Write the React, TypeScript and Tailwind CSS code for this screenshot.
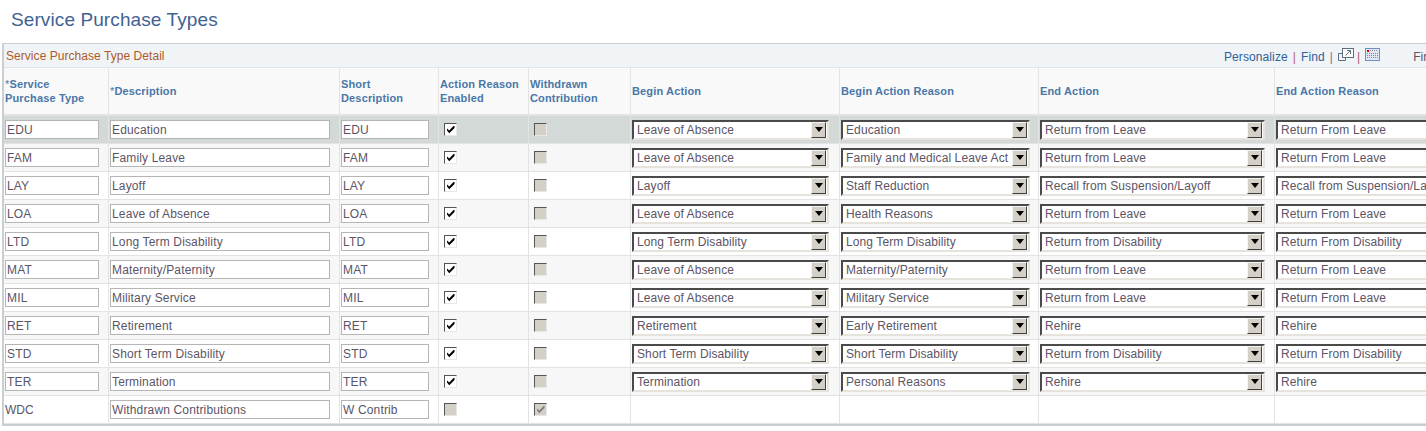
import React from "react"

type Row = {
  code: string
  desc: string
  short: string
  enabled: boolean
  withdrawn: boolean
  selects?: [string, string, string, string]
}

const rows: Row[] = [
  { code: "EDU", desc: "Education", short: "EDU", enabled: true, withdrawn: false, selects: ["Leave of Absence", "Education", "Return from Leave", "Return From Leave"] },
  { code: "FAM", desc: "Family Leave", short: "FAM", enabled: true, withdrawn: false, selects: ["Leave of Absence", "Family and Medical Leave Act", "Return from Leave", "Return From Leave"] },
  { code: "LAY", desc: "Layoff", short: "LAY", enabled: true, withdrawn: false, selects: ["Layoff", "Staff Reduction", "Recall from Suspension/Layoff", "Recall from Suspension/Layoff"] },
  { code: "LOA", desc: "Leave of Absence", short: "LOA", enabled: true, withdrawn: false, selects: ["Leave of Absence", "Health Reasons", "Return from Leave", "Return From Leave"] },
  { code: "LTD", desc: "Long Term Disability", short: "LTD", enabled: true, withdrawn: false, selects: ["Long Term Disability", "Long Term Disability", "Return from Disability", "Return From Disability"] },
  { code: "MAT", desc: "Maternity/Paternity", short: "MAT", enabled: true, withdrawn: false, selects: ["Leave of Absence", "Maternity/Paternity", "Return from Leave", "Return From Leave"] },
  { code: "MIL", desc: "Military Service", short: "MIL", enabled: true, withdrawn: false, selects: ["Leave of Absence", "Military Service", "Return from Leave", "Return From Leave"] },
  { code: "RET", desc: "Retirement", short: "RET", enabled: true, withdrawn: false, selects: ["Retirement", "Early Retirement", "Rehire", "Rehire"] },
  { code: "STD", desc: "Short Term Disability", short: "STD", enabled: true, withdrawn: false, selects: ["Short Term Disability", "Short Term Disability", "Return from Disability", "Return From Disability"] },
  { code: "TER", desc: "Termination", short: "TER", enabled: true, withdrawn: false, selects: ["Termination", "Personal Reasons", "Rehire", "Rehire"] },
  { code: "WDC", desc: "Withdrawn Contributions", short: "W Contrib", enabled: false, withdrawn: true },
]

const gridCols = "grid grid-cols-[105px_231px_99px_90px_102px_209px_199px_236px_220px]"
const cell = "flex items-center border-r border-b border-[#e3e3e3] pl-[1px]"

function Head({ children }: { children: React.ReactNode }) {
  return (
    <div className="flex h-[48px] items-center border-r border-b-2 border-[#e3e3e3] pl-[1px] text-[11px] leading-[14px] font-bold tracking-[0.15px] text-[#4a77a8]">
      <div>{children}</div>
    </div>
  )
}

function TextBox({ value, width }: { value: string; width: string }) {
  return (
    <div className={`${width} h-[19px] overflow-hidden border border-[#b5b5b5] bg-white pl-[1px] text-[12px] leading-[19px] tracking-[0.15px] whitespace-nowrap text-[#5c5566]`}>
      {value}
    </div>
  )
}

function Check({ on, disabled }: { on: boolean; disabled?: boolean }) {
  return (
    <div
      className={`ml-[4px] flex h-[13px] w-[13px] items-center justify-center border border-t-[#555] border-r-[#e8e8e8] border-b-[#e8e8e8] border-l-[#555] ${
        disabled ? "bg-[#d4d0c8]" : "bg-white"
      }`}
    >
      {on && (
        <svg viewBox="0 0 9 9" className="h-[9px] w-[9px]">
          <path d="M1 3.5 L3.2 5.5 L7.5 1 L8.5 1 L8.5 3 L3.5 8 L3 8 L1 5.5 Z" fill={disabled ? "#808080" : "#000"} />
        </svg>
      )}
    </div>
  )
}

function Select({ value, width }: { value: string; width: string }) {
  return (
    <div className={`${width} flex h-[20px] items-center border-2 border-t-[#4a4a4a] border-r-[#e6e3dd] border-b-[#e6e3dd] border-l-[#4a4a4a] bg-white`}>
      <div className="min-w-0 flex-1 overflow-hidden pl-[3px] text-[12px] leading-[16px] tracking-[0.1px] whitespace-nowrap text-[#5c5566]">{value}</div>
      <div className="mr-[1px] flex h-[16px] w-[15px] shrink-0 items-center justify-center border border-t-[#f4f4f4] border-r-[#404040] border-b-[#404040] border-l-[#f4f4f4] bg-[#d4d0c8]">
        <div className="h-0 w-0 border-x-[4px] border-t-[5px] border-x-transparent border-t-black" />
      </div>
    </div>
  )
}

export default function App() {
  return (
    <div className="h-[431px] w-[1426px] overflow-hidden bg-white font-['Liberation_Sans',Arial,sans-serif]">
      <h1 className="h-[43px] pt-[8px] pl-[11px] text-[19px] leading-[24px] font-normal tracking-[0.1px] text-[#3f6293]">
        Service Purchase Types
      </h1>
      <div className="ml-[2px] w-[1500px] border-t border-b-2 border-l-2 border-t-[#c8cfd2] border-b-[#c8cfd2] border-l-[#c8cfd2]">
        <div className="flex h-[24px] items-center justify-between border-b border-[#e3e3e3] bg-[#f1f4f6] pr-[65px] pl-[2px]">
          <span className="text-[12px] tracking-[0.05px] text-[#ad5a2b]">Service Purchase Type Detail</span>
          <div className="flex items-center pt-[3px] text-[12px] tracking-[0.1px] text-[#2f6099]">
            <span>Personalize</span>
            <span className="mx-[5px] text-[#b0607a]">|</span>
            <span>Find</span>
            <span className="mx-[5px] text-[#b0607a]">|</span>
            <svg viewBox="0 0 16 14" className="mb-[5px] h-[14px] w-[16px]" fill="none" stroke="#5d6f80">
              <rect x="4.5" y="0.5" width="11" height="9" fill="#fff" />
              <path d="M0.5 5.5h4M0.5 5.5v7h7v-3" />
              <path d="M7.5 7.5l5-5M9 2.5h3.5V6" />
            </svg>
            <span className="mr-[5px] ml-[3px] text-[#b0607a]">|</span>
            <svg viewBox="0 0 15 13" className="mb-[5px] h-[13px] w-[15px]">
              <rect x="0.5" y="0.5" width="14" height="12" fill="#dfe6f2" stroke="#6f90c4" />
              <rect x="2" y="2" width="2" height="2" fill="#e00000" />
              <path d="M5 2.5h8M2 5.5h11M2 7.5h11M2 9.5h11" stroke="#8a8a8a" strokeDasharray="1 1" />
            </svg>
            <span className="ml-[33px] text-[#5c5566]">First</span>
          </div>
        </div>
        <div className={`${gridCols} bg-[#f9f9f9]`}>
          <Head>
            <span className="font-normal">*</span>Service
            <br />
            Purchase Type
          </Head>
          <Head>
            <span className="font-normal">*</span>Description
          </Head>
          <Head>
            Short
            <br />
            Description
          </Head>
          <Head>
            Action Reason
            <br />
            Enabled
          </Head>
          <Head>
            Withdrawn
            <br />
            Contribution
          </Head>
          <Head>Begin Action</Head>
          <Head>Begin Action Reason</Head>
          <Head>End Action</Head>
          <Head>End Action Reason</Head>
        </div>
        {rows.map((r, i) => (
          <div
            key={r.code}
            className={`${gridCols} h-[28px] ${i === 0 ? "bg-[#d3d9d7]" : i % 2 === 1 ? "bg-[#f7f7f7]" : "bg-white"}`}
          >
            <div className={cell}>
              {r.selects ? <TextBox value={r.code} width="w-[94px]" /> : <span className="text-[12px] text-[#5c5566]">{r.code}</span>}
            </div>
            <div className={cell}>
              <TextBox value={r.desc} width="w-[220px]" />
            </div>
            <div className={cell}>
              <TextBox value={r.short} width="w-[88px]" />
            </div>
            <div className={cell}>
              <Check on={r.enabled} disabled={!r.selects} />
            </div>
            <div className={cell}>
              <Check on={r.withdrawn} disabled />
            </div>
            <div className={cell}>{r.selects && <Select value={r.selects[0]} width="w-[197px]" />}</div>
            <div className={cell}>{r.selects && <Select value={r.selects[1]} width="w-[189px]" />}</div>
            <div className={cell}>{r.selects && <Select value={r.selects[2]} width="w-[225px]" />}</div>
            <div className={cell}>{r.selects && <Select value={r.selects[3]} width="w-[210px]" />}</div>
          </div>
        ))}
      </div>
    </div>
  )
}
